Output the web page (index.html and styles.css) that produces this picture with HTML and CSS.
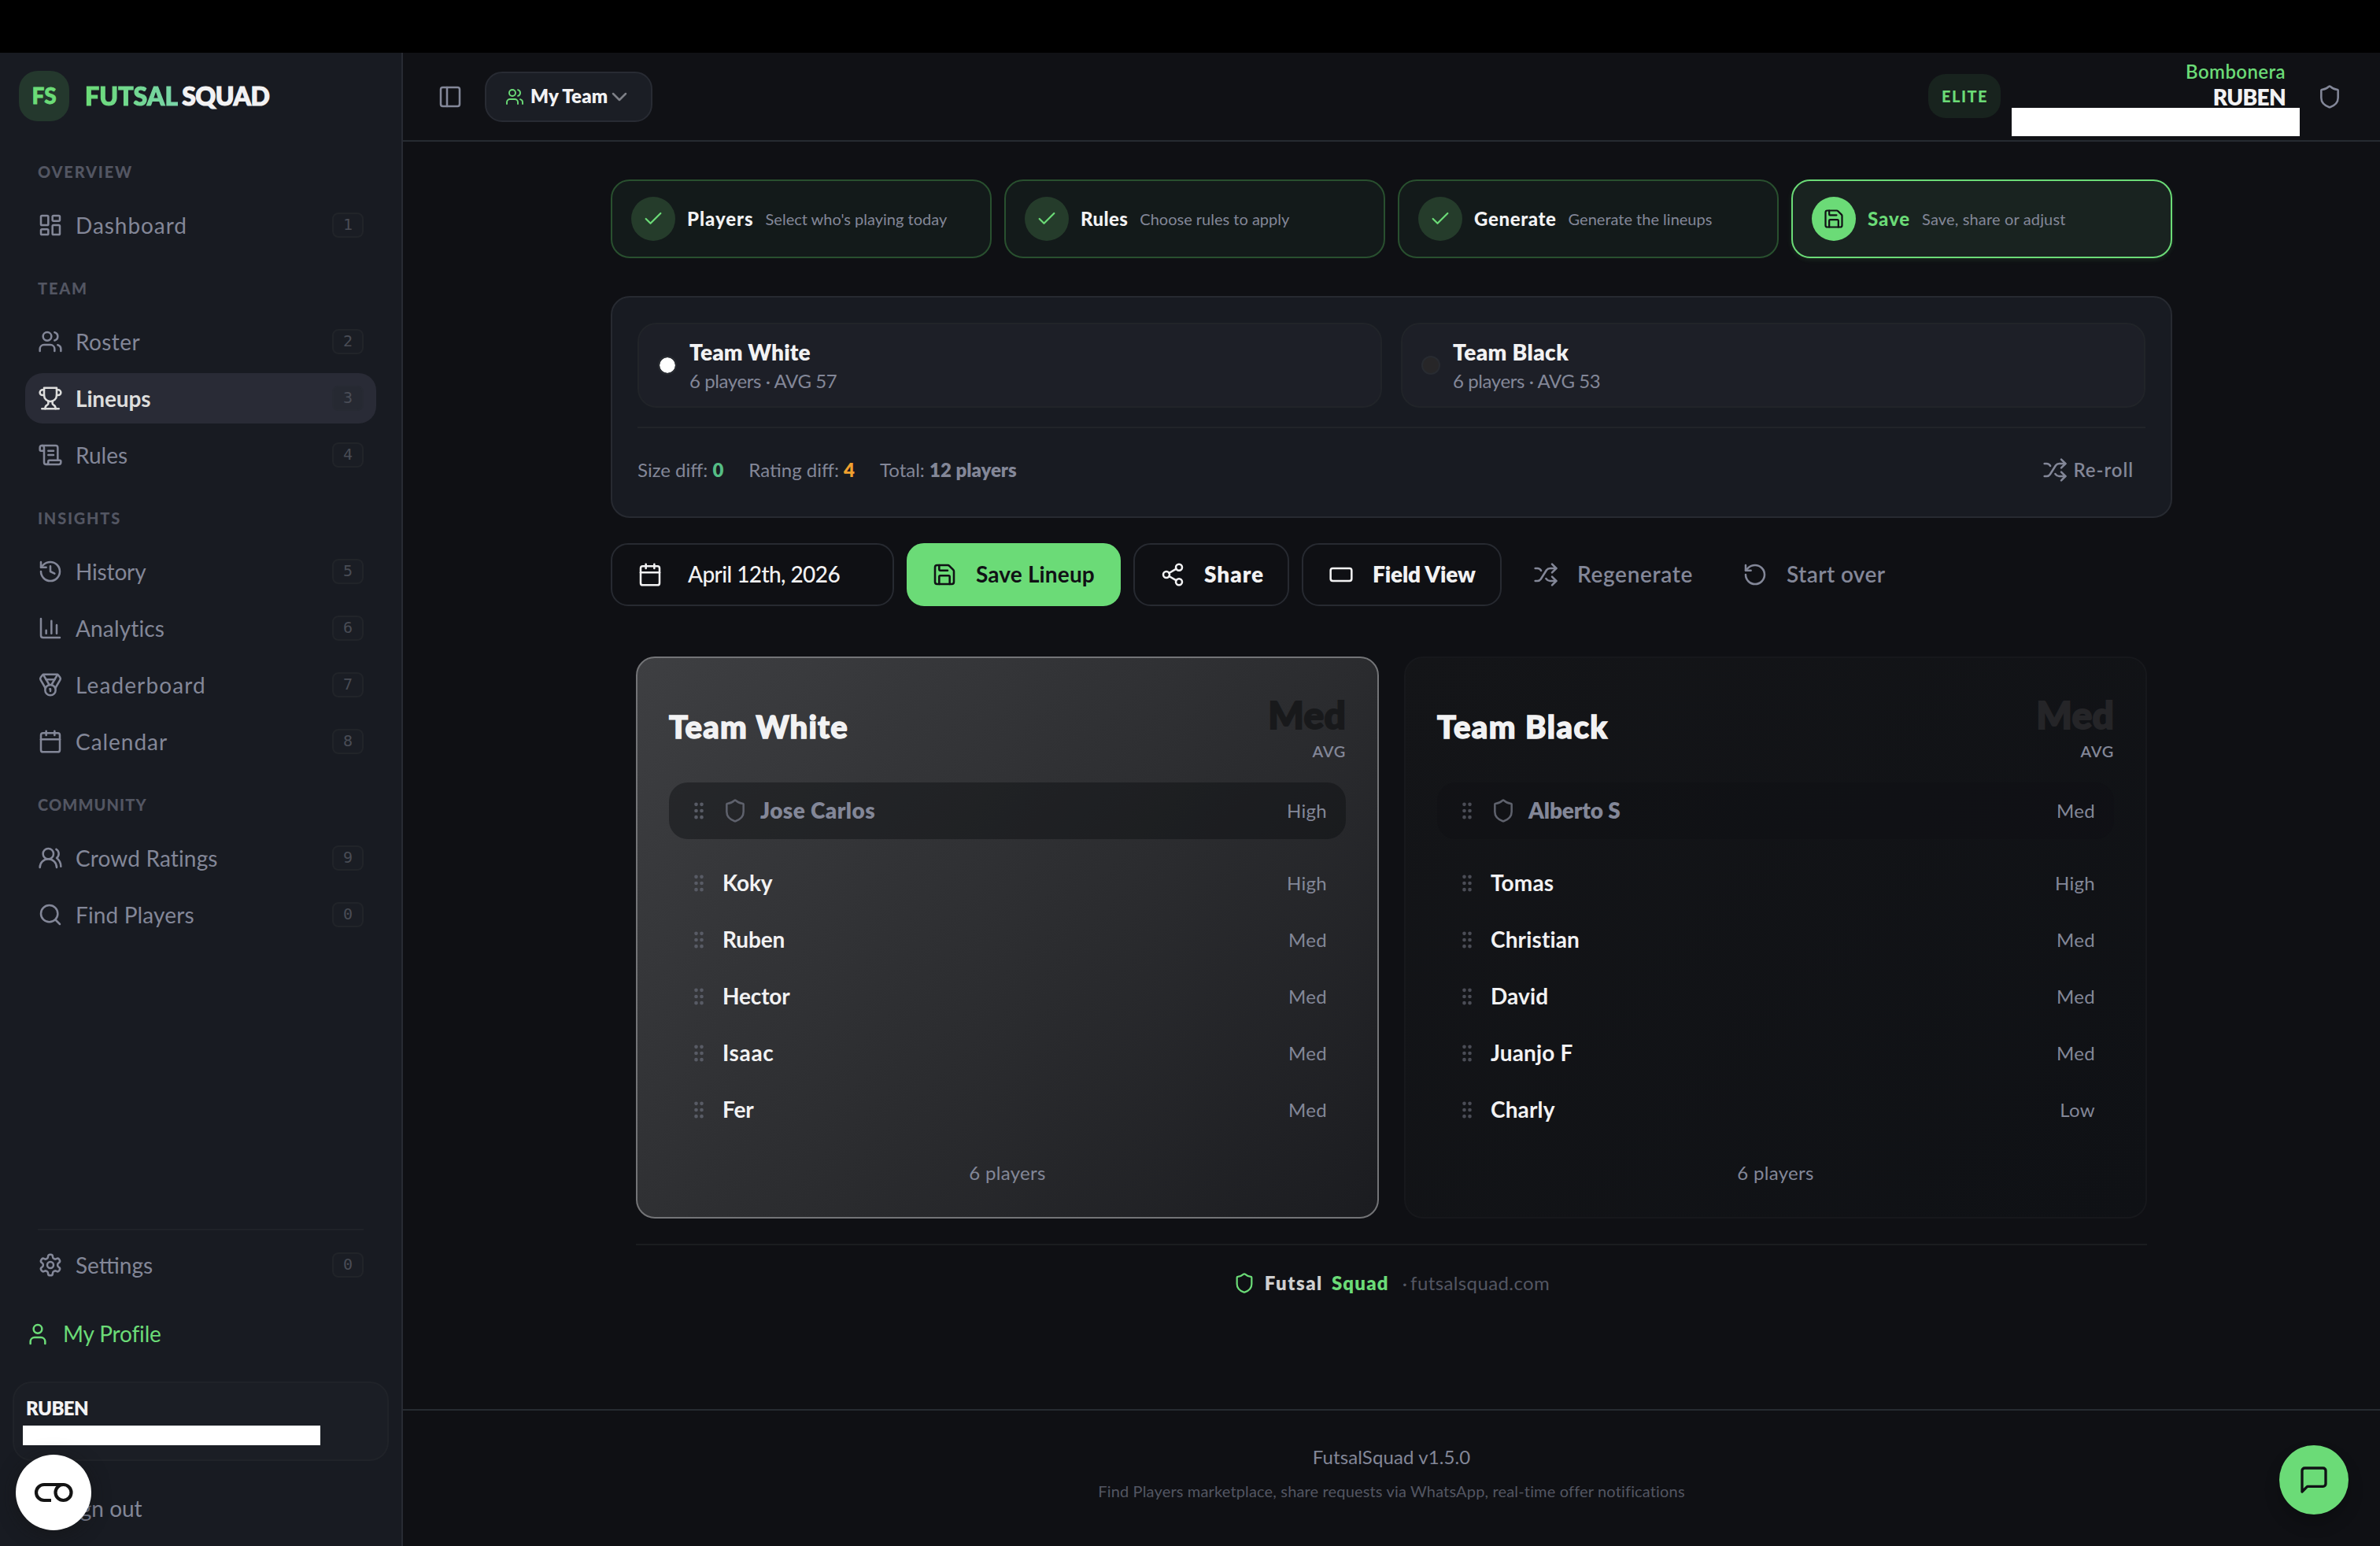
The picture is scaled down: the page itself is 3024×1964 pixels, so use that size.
FILE: index.html
```html
<!DOCTYPE html>
<html lang="en">
<head>
<meta charset="utf-8">
<title>Futsal Squad – Lineups</title>
<link rel="stylesheet" href="styles.css">
</head>
<body>
<svg class="sprite" aria-hidden="true">
  <symbol id="dashboard" viewBox="0 0 24 24"><rect x="3" y="3" width="7" height="9" rx="1"/><rect x="14" y="3" width="7" height="5" rx="1"/><rect x="14" y="12" width="7" height="9" rx="1"/><rect x="3" y="16" width="7" height="5" rx="1"/></symbol>
  <symbol id="users" viewBox="0 0 24 24"><path d="M16 21v-2a4 4 0 0 0-4-4H6a4 4 0 0 0-4 4v2"/><circle cx="9" cy="7" r="4"/><path d="M22 21v-2a4 4 0 0 0-3-3.87"/><path d="M16 3.13a4 4 0 0 1 0 7.75"/></symbol>
  <symbol id="trophy" viewBox="0 0 24 24"><path d="M6 9H4.5a2.5 2.5 0 0 1 0-5H6"/><path d="M18 9h1.500a2.500 2.500 0 0 0 0-5H18"/><path d="M4 22h16"/><path d="M10 14.660V17c0 .55-.47.98-.97 1.210C7.850 18.750 7 20.240 7 22"/><path d="M14 14.660V17c0 .55.47.98.97 1.210C16.150 18.750 17 20.240 17 22"/><path d="M18 2H6v7a6 6 0 0 0 12 0V2Z"/></symbol>
  <symbol id="scroll" viewBox="0 0 24 24"><path d="M15 12h-5"/><path d="M15 8h-5"/><path d="M19 17V5a2 2 0 0 0-2-2H4"/><path d="M8 21h12a2 2 0 0 0 2-2v-1a1 1 0 0 0-1-1H11a1 1 0 0 0-1 1v1a2 2 0 1 1-4 0V5a2 2 0 1 0-4 0v2a1 1 0 0 0 1 1h3"/></symbol>
  <symbol id="history" viewBox="0 0 24 24"><path d="M3 12a9 9 0 1 0 9-9 9.750 9.750 0 0 0-6.740 2.740L3 8"/><path d="M3 3v5h5"/><path d="M12 7v5l4 2"/></symbol>
  <symbol id="chart" viewBox="0 0 24 24"><path d="M3 3v16a2 2 0 0 0 2 2h16"/><path d="M18 17V9"/><path d="M13 17V5"/><path d="M8 17v-3"/></symbol>
  <symbol id="medal" viewBox="0 0 24 24"><path d="M7.210 15 2.660 7.140a2 2 0 0 1 .13-2.200L4.400 2.800A2 2 0 0 1 6 2h12a2 2 0 0 1 1.600.8l1.600 2.140a2 2 0 0 1 .14 2.200L16.790 15"/><path d="M11 12 5.120 2.200"/><path d="m13 12 5.880-9.800"/><path d="M8 7h8"/><circle cx="12" cy="17" r="5"/><path d="M12 18v-2h-.5"/></symbol>
  <symbol id="calendar" viewBox="0 0 24 24"><path d="M8 2v4"/><path d="M16 2v4"/><rect x="3" y="4" width="18" height="18" rx="2"/><path d="M3 10h18"/></symbol>
  <symbol id="crowd" viewBox="0 0 24 24"><path d="M18 21a8 8 0 0 0-16 0"/><circle cx="10" cy="8" r="5"/><path d="M22 20c0-3.370-2-6.500-4-8a5 5 0 0 0-.45-8.300"/></symbol>
  <symbol id="search" viewBox="0 0 24 24"><circle cx="11" cy="11" r="8"/><path d="m21 21-4.300-4.300"/></symbol>
  <symbol id="settings" viewBox="0 0 24 24"><path d="M12.220 2h-.44a2 2 0 0 0-2 2v.18a2 2 0 0 1-1 1.730l-.43.25a2 2 0 0 1-2 0l-.15-.08a2 2 0 0 0-2.730.73l-.22.38a2 2 0 0 0 .73 2.730l.15.1a2 2 0 0 1 1 1.720v.51a2 2 0 0 1-1 1.740l-.15.09a2 2 0 0 0-.73 2.730l.22.38a2 2 0 0 0 2.730.73l.15-.08a2 2 0 0 1 2 0l.43.25a2 2 0 0 1 1 1.730V20a2 2 0 0 0 2 2h.44a2 2 0 0 0 2-2v-.18a2 2 0 0 1 1-1.730l.43-.25a2 2 0 0 1 2 0l.15.08a2 2 0 0 0 2.730-.73l.22-.39a2 2 0 0 0-.73-2.730l-.15-.08a2 2 0 0 1-1-1.740v-.5a2 2 0 0 1 1-1.740l.15-.09a2 2 0 0 0 .73-2.730l-.22-.38a2 2 0 0 0-2.730-.73l-.15.08a2 2 0 0 1-2 0l-.43-.25a2 2 0 0 1-1-1.730V4a2 2 0 0 0-2-2z"/><circle cx="12" cy="12" r="3"/></symbol>
  <symbol id="user" viewBox="0 0 24 24"><path d="M19 21v-2a4 4 0 0 0-4-4H9a4 4 0 0 0-4 4v2"/><circle cx="12" cy="7" r="4"/></symbol>
  <symbol id="logout" viewBox="0 0 24 24"><path d="M9 21H5a2 2 0 0 1-2-2V5a2 2 0 0 1 2-2h4"/><path d="m16 17 5-5-5-5"/><path d="M21 12H9"/></symbol>
  <symbol id="panel" viewBox="0 0 24 24"><rect x="3" y="3" width="18" height="18" rx="2"/><path d="M9 3v18"/></symbol>
  <symbol id="chevron" viewBox="0 0 24 24"><path d="m6 9 6 6 6-6"/></symbol>
  <symbol id="shield" viewBox="0 0 24 24"><path d="M20 13c0 5-3.500 7.500-7.660 8.950a1 1 0 0 1-.67-.01C7.500 20.500 4 18 4 13V6a1 1 0 0 1 1-1c2 0 4.500-1.200 6.240-2.720a1.170 1.170 0 0 1 1.520 0C14.510 3.810 17 5 19 5a1 1 0 0 1 1 1z"/></symbol>
  <symbol id="check" viewBox="0 0 24 24"><path d="M20 6 9 17l-5-5"/></symbol>
  <symbol id="save" viewBox="0 0 24 24"><path d="M15.200 3a2 2 0 0 1 1.400.6l3.800 3.800a2 2 0 0 1 .6 1.400V19a2 2 0 0 1-2 2H5a2 2 0 0 1-2-2V5a2 2 0 0 1 2-2z"/><path d="M17 21v-7a1 1 0 0 0-1-1H8a1 1 0 0 0-1 1v7"/><path d="M7 3v4a1 1 0 0 0 1 1h7"/></symbol>
  <symbol id="share" viewBox="0 0 24 24"><circle cx="18" cy="5" r="3"/><circle cx="6" cy="12" r="3"/><circle cx="18" cy="19" r="3"/><path d="m8.590 13.510 6.830 3.980"/><path d="m15.410 6.510-6.820 3.980"/></symbol>
  <symbol id="field" viewBox="0 0 24 24"><rect x="2" y="6" width="20" height="12" rx="2"/></symbol>
  <symbol id="shuffle" viewBox="0 0 24 24"><path d="m18 14 4 4-4 4"/><path d="m18 2 4 4-4 4"/><path d="M2 18h1.970a4 4 0 0 0 3.300-1.700l5.450-8.600a4 4 0 0 1 3.300-1.700H22"/><path d="M2 6h1.970a4 4 0 0 1 3.600 2.200"/><path d="M22 18h-6.040a4 4 0 0 1-3.300-1.800l-.36-.45"/></symbol>
  <symbol id="undo" viewBox="0 0 24 24"><path d="M3 12a9 9 0 1 0 9-9 9.750 9.750 0 0 0-6.740 2.740L3 8"/><path d="M3 3v5h5"/></symbol>
  <symbol id="grip" viewBox="0 0 24 24"><circle cx="9" cy="12" r="1"/><circle cx="9" cy="5" r="1"/><circle cx="9" cy="19" r="1"/><circle cx="15" cy="12" r="1"/><circle cx="15" cy="5" r="1"/><circle cx="15" cy="19" r="1"/></symbol>
  <symbol id="message" viewBox="0 0 24 24"><path d="M21 15a2 2 0 0 1-2 2H7l-4 4V5a2 2 0 0 1 2-2h14a2 2 0 0 1 2 2z"/></symbol>
</svg>

<div class="topbar"></div>
<div class="app">
  <aside class="sidebar">
    <div class="brand">
      <span class="brand-mark">FS</span>
      <span class="brand-name"><span class="brand-green">FUTSAL</span><span class="brand-white">SQUAD</span></span>
    </div>
    <nav class="nav">
      <h2 class="nav-label">OVERVIEW</h2>
      <a class="nav-item"><svg class="icon"><use href="#dashboard"/></svg><span class="nav-text track-3">Dashboard</span><kbd class="key">1</kbd></a>
      <h2 class="nav-label">TEAM</h2>
      <a class="nav-item"><svg class="icon"><use href="#users"/></svg><span class="nav-text track-1">Roster</span><kbd class="key">2</kbd></a>
      <a class="nav-item active"><svg class="icon"><use href="#trophy"/></svg><span class="nav-text track-flat">Lineups</span><kbd class="key">3</kbd></a>
      <a class="nav-item"><svg class="icon"><use href="#scroll"/></svg><span class="nav-text">Rules</span><kbd class="key">4</kbd></a>
      <h2 class="nav-label">INSIGHTS</h2>
      <a class="nav-item"><svg class="icon"><use href="#history"/></svg><span class="nav-text track-flat">History</span><kbd class="key">5</kbd></a>
      <a class="nav-item"><svg class="icon"><use href="#chart"/></svg><span class="nav-text track-0">Analytics</span><kbd class="key">6</kbd></a>
      <a class="nav-item"><svg class="icon"><use href="#medal"/></svg><span class="nav-text track-4">Leaderboard</span><kbd class="key">7</kbd></a>
      <a class="nav-item"><svg class="icon"><use href="#calendar"/></svg><span class="nav-text track-3">Calendar</span><kbd class="key">8</kbd></a>
      <h2 class="nav-label nav-label-tight">COMMUNITY</h2>
      <a class="nav-item"><svg class="icon"><use href="#crowd"/></svg><span class="nav-text track-0">Crowd Ratings</span><kbd class="key">9</kbd></a>
      <a class="nav-item"><svg class="icon"><use href="#search"/></svg><span class="nav-text track-0">Find Players</span><kbd class="key">0</kbd></a>
    </nav>
    <div class="side-foot">
      <div class="nav nav-settings">
        <a class="nav-item"><svg class="icon"><use href="#settings"/></svg><span class="nav-text">Settings</span><kbd class="key">0</kbd></a>
      </div>
      <a class="side-link profile"><svg class="icon"><use href="#user"/></svg><span class="track-flat">My Profile</span></a>
      <div class="account">
        <span class="account-name">RUBEN</span>
        <span class="account-mask"></span>
      </div>
      <a class="side-link signout"><svg class="icon"><use href="#logout"/></svg><span>Sign out</span></a>
    </div>
  </aside>

  <main class="main">
    <header class="header">
      <svg class="icon panel-toggle"><use href="#panel"/></svg>
      <button class="team-select"><svg class="icon icon-sm green"><use href="#users"/></svg><span class="team-select-name">My Team</span><svg class="icon chevron"><use href="#chevron"/></svg></button>
      <span class="plan">ELITE</span>
      <div class="identity">
        <span class="identity-club">Bombonera</span>
        <span class="identity-name">RUBEN</span>
        <span class="identity-mask"></span>
      </div>
      <svg class="icon muted"><use href="#shield"/></svg>
    </header>

    <div class="content">
      <ol class="steps">
        <li class="step"><span class="step-dot"><svg class="icon icon-md"><use href="#check"/></svg></span><b class="step-title track-3">Players</b><span class="step-desc">Select who's playing today</span></li>
        <li class="step"><span class="step-dot"><svg class="icon icon-md"><use href="#check"/></svg></span><b class="step-title track-1">Rules</b><span class="step-desc">Choose rules to apply</span></li>
        <li class="step"><span class="step-dot"><svg class="icon icon-md"><use href="#check"/></svg></span><b class="step-title track-2">Generate</b><span class="step-desc">Generate the lineups</span></li>
        <li class="step current"><span class="step-dot"><svg class="icon icon-md"><use href="#save"/></svg></span><b class="step-title track-3">Save</b><span class="step-desc track-0">Save, share or adjust</span></li>
      </ol>

      <section class="summary">
        <div class="summary-teams">
          <div class="mini"><i class="dot dot-white"></i><div class="mini-text"><b class="mini-name track-0">Team White</b><span class="mini-sub">6 players · AVG 57</span></div></div>
          <div class="mini"><i class="dot dot-black"></i><div class="mini-text"><b class="mini-name track-1">Team Black</b><span class="mini-sub">6 players · AVG 53</span></div></div>
        </div>
        <div class="stats">
          <span class="stat">Size diff: <b class="ok">0</b></span>
          <span class="stat">Rating diff: <b class="warn">4</b></span>
          <span class="stat">Total: <b>12 players</b></span>
          <button class="reroll"><svg class="icon"><use href="#shuffle"/></svg><span class="track-3">Re-roll</span></button>
        </div>
      </section>

      <div class="actions">
        <button class="btn btn-date"><svg class="icon"><use href="#calendar"/></svg><span class="track-neg">April 12th, 2026</span></button>
        <button class="btn btn-save"><svg class="icon"><use href="#save"/></svg><span class="track-0">Save Lineup</span></button>
        <button class="btn btn-share"><svg class="icon"><use href="#share"/></svg><span class="track-3">Share</span></button>
        <button class="btn btn-field"><svg class="icon"><use href="#field"/></svg><span class="track-flat">Field View</span></button>
        <button class="btn btn-ghost btn-regen"><svg class="icon"><use href="#shuffle"/></svg><span class="track-2">Regenerate</span></button>
        <button class="btn btn-ghost"><svg class="icon"><use href="#undo"/></svg><span class="track-1">Start over</span></button>
      </div>

      <div class="board">
        <div class="teams">
          <section class="team team-white">
            <div class="team-head"><h3 class="team-name">Team White</h3><div class="team-rate"><span class="team-med">Med</span><span class="team-avg">AVG</span></div></div>
            <div class="player captain"><svg class="icon grip"><use href="#grip"/></svg><svg class="icon captain-shield"><use href="#shield"/></svg><b class="player-name track-1">Jose Carlos</b><span class="level">High</span></div>
            <div class="players">
              <div class="player"><svg class="icon grip"><use href="#grip"/></svg><span class="player-name track-flat">Koky</span><span class="level">High</span></div>
              <div class="player"><svg class="icon grip"><use href="#grip"/></svg><span class="player-name track-flat">Ruben</span><span class="level">Med</span></div>
              <div class="player"><svg class="icon grip"><use href="#grip"/></svg><span class="player-name track-flat">Hector</span><span class="level">Med</span></div>
              <div class="player"><svg class="icon grip"><use href="#grip"/></svg><span class="player-name track-2">Isaac</span><span class="level">Med</span></div>
              <div class="player"><svg class="icon grip"><use href="#grip"/></svg><span class="player-name track-flat">Fer</span><span class="level">Med</span></div>
            </div>
            <div class="team-count">6 players</div>
          </section>
          <section class="team team-black">
            <div class="team-head"><h3 class="team-name team-name-black">Team Black</h3><div class="team-rate"><span class="team-med">Med</span><span class="team-avg">AVG</span></div></div>
            <div class="player captain"><svg class="icon grip"><use href="#grip"/></svg><svg class="icon captain-shield"><use href="#shield"/></svg><b class="player-name track-flat">Alberto S</b><span class="level">Med</span></div>
            <div class="players">
              <div class="player"><svg class="icon grip"><use href="#grip"/></svg><span class="player-name track-0">Tomas</span><span class="level">High</span></div>
              <div class="player"><svg class="icon grip"><use href="#grip"/></svg><span class="player-name track-0">Christian</span><span class="level">Med</span></div>
              <div class="player"><svg class="icon grip"><use href="#grip"/></svg><span class="player-name track-0">David</span><span class="level">Med</span></div>
              <div class="player"><svg class="icon grip"><use href="#grip"/></svg><span class="player-name track-0">Juanjo F</span><span class="level">Med</span></div>
              <div class="player"><svg class="icon grip"><use href="#grip"/></svg><span class="player-name track-0">Charly</span><span class="level">Low</span></div>
            </div>
            <div class="team-count">6 players</div>
          </section>
        </div>
        <div class="watermark"><svg class="icon icon-md green"><use href="#shield"/></svg><b class="wm-futsal">Futsal</b><b class="wm-squad">Squad</b><span class="wm-dot">·</span><span class="wm-url">futsalsquad.com</span></div>
      </div>
    </div>

    <footer class="footer">
      <p class="version">FutsalSquad v1.5.0</p>
      <p class="note">Find Players marketplace, share requests via WhatsApp, real-time offer notifications</p>
    </footer>
  </main>
</div>

<button class="consent"><svg class="consent-icon" viewBox="0 0 49 24"><path d="M21 22H12A10 10 0 0 1 12 2H37"/><circle cx="36.500" cy="12" r="10"/></svg></button>
<button class="chat"><svg class="icon chat-icon"><use href="#message"/></svg></button>
</body>
</html>
```
FILE: styles.css
```css
:root {
  --bg: #0f1014;
  --side: #181b22;
  --line: #272a31;
  --text: #f2f2f3;
  --muted: #838798;
  --dim: #535662;
  --green: #6bdb77;
}

* { box-sizing: border-box; }

body {
  margin: 0;
  height: 1964px;
  display: flex;
  flex-direction: column;
  overflow: hidden;
  background: var(--bg);
  color: var(--text);
  font-family: Lato, "Liberation Sans", sans-serif;
  font-size: 28px;
  line-height: 1.2;
}

h2, h3, p, ol { margin: 0; padding: 0; font-weight: 400; }
button { border: 0; margin: 0; padding: 0; background: none; color: inherit; font: inherit; }
span, b { white-space: nowrap; }
b { font-weight: 800; }

.sprite { display: none; }
.icon {
  flex: none;
  width: 32px;
  height: 32px;
  fill: none;
  stroke: currentColor;
  stroke-width: 1.9;
  stroke-linecap: round;
  stroke-linejoin: round;
}
.icon-sm { width: 24px; height: 24px; }
.icon-md { width: 28px; height: 28px; }
.green { color: var(--green); }
.muted { color: var(--muted); }

.track-neg { letter-spacing: -.58px; }
.track-flat { letter-spacing: -.15px; }
.track-0 { letter-spacing: .15px; }
.track-1 { letter-spacing: .4px; }
.track-2 { letter-spacing: .65px; }
.track-3 { letter-spacing: .95px; }
.track-4 { letter-spacing: 1.12px; }

.topbar { flex: none; height: 67px; background: #000; }
.app { flex: 1; display: flex; min-height: 0; }

/* Sidebar */
.sidebar {
  flex: none;
  width: 512px;
  display: flex;
  flex-direction: column;
  padding: 23px 0 15px;
  background: var(--side);
  border-right: 2px solid #282b33;
}
.brand { display: flex; align-items: center; gap: 20px; padding-left: 24px; }
.brand-mark {
  width: 64px;
  height: 64px;
  border-radius: 24px;
  display: grid;
  place-items: center;
  background: #24382d;
  color: var(--green);
  font-size: 28px;
  font-weight: 900;
  -webkit-text-stroke: .8px currentColor;
}
.brand-name { display: flex; gap: 5px; font-size: 32px; font-weight: 900; }
.brand-green {
  letter-spacing: .1px;
  background: linear-gradient(90deg, #6bdb77, #79d5a9);
  background-clip: text;
  -webkit-background-clip: text;
  color: transparent;
  -webkit-text-stroke: 1.2px transparent;
}
.brand-white { letter-spacing: -.5px; -webkit-text-stroke: 1.2px currentColor; }

.nav { display: flex; flex-direction: column; gap: 8px; padding: 52px 32px 0; }
.nav-label {
  margin: 28px 0 16px 16px;
  height: 24px;
  color: var(--dim);
  font-size: 20px;
  font-weight: 900;
  letter-spacing: 1.8px;
}
.nav-label:first-child { margin-top: 0; }
.nav-label-tight { letter-spacing: 1.1px; }
.nav-item {
  height: 64px;
  display: flex;
  align-items: center;
  gap: 16px;
  padding: 0 16px;
  border-radius: 22px;
  color: var(--muted);
}
.nav-text { flex: 1; padding-top: 1px; }
.nav-item.active { background: #292b36; color: #dddddc; font-weight: 700; }
.key {
  width: 40px;
  height: 32px;
  border: 2px solid #212429;
  border-radius: 8px;
  background: #1a1d24;
  color: #494c55;
  text-align: center;
  font: 20px/27px "DejaVu Sans Mono", monospace;
}
.active .key { border-color: #272a33; background: #262932; color: #4a4d57; }

.side-foot { margin-top: auto; display: flex; flex-direction: column; }
.nav-settings { margin: 0 48px; padding: 12px 0 0; border-top: 2px solid #1f2228; }
.nav-settings .nav-item { padding: 0; }
.side-link { height: 64px; display: flex; align-items: center; gap: 16px; padding-left: 32px; color: var(--muted); }
.profile { margin-top: 24px; color: var(--green); }
.account {
  margin: 28px 16px 0;
  height: 101px;
  display: flex;
  flex-direction: column;
  padding: 18px 11px 0;
  background: #1b1e25;
  border: 2px solid #202329;
  border-radius: 24px;
}
.account-name { padding-left: 4px; font-size: 24px; font-weight: 800; letter-spacing: -.6px; }
.account-mask { margin-top: 7px; width: 378px; height: 25px; background: #fff; }
.signout { margin-top: 29px; }

/* Header */
.main { flex: 1; display: flex; flex-direction: column; min-width: 0; }
.header {
  flex: none;
  height: 113px;
  display: flex;
  align-items: center;
  padding: 0 48px 0 44px;
  background: #101115;
  border-bottom: 2px solid #262b31;
}
.panel-toggle { color: var(--muted); margin-right: 28px; }
.team-select {
  width: 213px;
  height: 64px;
  display: flex;
  align-items: center;
  padding-left: 24px;
  background: #1b1e25;
  border: 2px solid #282b33;
  border-radius: 22px;
  font-size: 24px;
  font-weight: 800;
}
.team-select-name { margin-left: 8px; letter-spacing: .1px; }
.chevron { color: #7e8087; margin-left: -1px; }
.plan {
  width: 92px;
  height: 56px;
  margin: -1px 14px 0 auto;
  border-radius: 22px;
  display: grid;
  place-items: center;
  background: #18231e;
  color: var(--green);
  font-size: 20px;
  font-weight: 900;
  letter-spacing: 1.5px;
  padding-left: 1px;
}
.identity {
  align-self: flex-start;
  width: 366px;
  margin: 8px 22px 0 0;
  display: flex;
  flex-direction: column;
  text-align: right;
}
.identity-club { padding-right: 18px; color: var(--green); font-size: 24px; line-height: 32px; font-weight: 600; letter-spacing: .4px; }
.identity-name { padding-right: 18px; font-size: 28px; line-height: 32px; font-weight: 800; letter-spacing: -.7px; }
.identity-mask { height: 36px; margin-top: -2px; background: #fff; }

/* Content */
.content { width: 1984px; margin: 0 auto; padding-top: 48px; }

.steps { display: grid; grid-template-columns: repeat(4, 1fr); gap: 16px; list-style: none; }
.step {
  height: 100px;
  display: flex;
  align-items: center;
  padding-left: 24px;
  background: #131a1a;
  border: 2px solid #29502f;
  border-radius: 24px;
}
.step-dot {
  width: 56px;
  height: 56px;
  border-radius: 50%;
  display: grid;
  place-items: center;
  background: #253c2b;
  color: var(--green);
}
.step-title { margin: 0 15px 0 15px; font-size: 24px; font-weight: 900; }
.step-desc { color: var(--muted); font-size: 20px; }
.step.current { background: #192320; border-color: var(--green); box-shadow: 0 2px 6px rgba(107, 219, 119, .12); }
.current .step-dot { background: var(--green); color: #101115; }
.current .step-title { color: var(--green); }

.summary {
  height: 282px;
  margin-top: 48px;
  padding: 32px;
  background: #181b22;
  border: 2px solid var(--line);
  border-radius: 24px;
}
.summary-teams { display: grid; grid-template-columns: 1fr 1fr; gap: 24px; padding-bottom: 24px; border-bottom: 2px solid #212429; }
.mini {
  height: 108px;
  display: flex;
  align-items: center;
  gap: 16px;
  padding-left: 24px;
  background: #1d1f27;
  border: 2px solid #212429;
  border-radius: 24px;
}
.dot { width: 24px; height: 24px; border-radius: 50%; border: 2px solid #282b31; }
.dot-white { background: #fff; background-clip: padding-box; }
.dot-black { background: #272628; }
.mini-text { display: flex; flex-direction: column; gap: 5px; padding-top: 2px; }
.mini-name { font-weight: 800; }
.mini-sub { color: var(--muted); font-size: 24px; letter-spacing: -.4px; }
.stats { height: 54px; margin-top: 26px; display: flex; align-items: center; gap: 32px; color: var(--muted); font-size: 24px; }
.ok { color: #55bd85; }
.warn { color: #f0a02f; }
.reroll { margin: 0 15px 0 auto; display: flex; align-items: center; gap: 7px; font-weight: 600; }

.actions { display: flex; gap: 16px; margin-top: 32px; }
.btn {
  height: 80px;
  display: flex;
  align-items: center;
  gap: 24px;
  padding: 0 32px;
  border: 2px solid var(--line);
  border-radius: 22px;
  font-weight: 800;
}
.btn-date { width: 360px; gap: 32px; font-weight: 500; }
.btn-save { width: 272px; padding: 0 30px; background: var(--green); border-color: var(--green); color: #101115; font-weight: 700; }
.btn-share { width: 198px; }
.btn-field { width: 254px; }
.btn-ghost { padding: 0 22px; border-color: transparent; color: var(--muted); font-weight: 600; }
.btn-regen { width: 250px; }

/* Team cards */
.board { padding: 64px 32px 0; }
.teams { display: grid; grid-template-columns: 1fr 1fr; gap: 32px; padding-bottom: 32px; border-bottom: 2px solid #1b1d20; }
.team { height: 714px; padding: 40px; border: 2px solid; border-radius: 24px; background-origin: border-box; }
.team-white { border-color: #737477; background-image: linear-gradient(135deg, #3e3f42, #2b2c2f 55%, #1b1c20); }
.team-black { border-color: #17181c; background-image: linear-gradient(135deg, #141518, #0f1115); }
.team-head { display: flex; align-items: center; justify-content: space-between; margin-bottom: 24px; }
.team-name { font-size: 40px; font-weight: 900; letter-spacing: 1.2px; -webkit-text-stroke: 1.5px currentColor; }
.team-name-black { letter-spacing: 1.5px; }
.team-rate { display: flex; flex-direction: column; text-align: right; }
.team-med { font-size: 48px; line-height: 64px; font-weight: 900; letter-spacing: .2px; color: #18191b; -webkit-text-stroke: 2px currentColor; }
.team-black .team-med { color: #252528; }
.team-avg { font-size: 20px; line-height: 29px; font-weight: 600; letter-spacing: .7px; color: var(--muted); }
.team-rate { padding-bottom: 1px; }
.player { height: 72px; display: flex; align-items: center; gap: 16px; padding: 0 24px; font-weight: 700; }
.captain { border-radius: 24px; background: rgba(8, 9, 13, .4); color: var(--muted); }
.team-black .captain { background: rgba(15, 16, 20, .4); }
.players { margin-top: 20px; }
.grip { width: 28px; height: 28px; color: #585b65; stroke-width: 2; }
.team-black .grip { color: #4a4c55; }
.captain-shield { color: #5e616c; }
.player-name { flex: 1; }
.level { color: var(--muted); font-size: 24px; font-weight: 400; letter-spacing: .3px; }
.team-count { padding-top: 30px; text-align: center; color: var(--muted); font-size: 24px; letter-spacing: .35px; }

.watermark { height: 96px; display: flex; align-items: center; justify-content: center; font-size: 24px; }
.wm-futsal { margin-left: 12px; color: #cfcfd0; letter-spacing: 1.5px; }
.wm-squad { margin-left: 11px; color: var(--green); letter-spacing: 1.2px; }
.wm-dot { margin-left: 17px; color: var(--dim); }
.wm-url { margin-left: 4px; color: var(--dim); letter-spacing: .39px; }

/* Footer */
.footer {
  margin-top: auto;
  height: 174px;
  border-top: 2px solid #262b31;
  text-align: center;
}
.version { margin-top: 45px; font-size: 24px; color: var(--muted); letter-spacing: .1px; }
.note { margin-top: 16px; font-size: 20px; color: var(--dim); letter-spacing: .16px; }

/* Floating buttons */
.consent, .chat { position: absolute; border-radius: 50%; display: grid; place-items: center; }
.consent { left: 20px; bottom: 20px; width: 96px; height: 96px; background: #fff; box-shadow: 0 4px 22px rgba(20, 20, 20, .55); }
.consent-icon { width: 49px; height: 24px; fill: none; stroke: #141414; stroke-width: 4.2; overflow: visible; }
.chat { right: 40px; bottom: 40px; width: 88px; height: 88px; background: var(--green); color: #101115; box-shadow: 0 12px 20px rgba(0, 0, 0, .2); }
.chat-icon { width: 40px; height: 40px; stroke-width: 2; }
```
